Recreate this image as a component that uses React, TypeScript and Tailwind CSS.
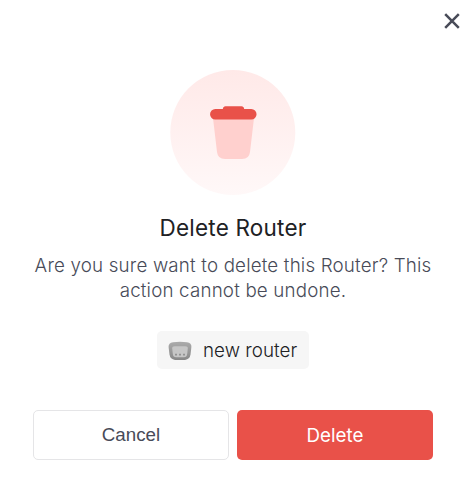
import React from "react";

function CloseIcon() {
  return (
    <svg width="16" height="16" viewBox="0 0 16 16" fill="none" stroke="#484b58" strokeWidth="2.5">
      <path d="M1.2 1.2 14.8 14.8M14.8 1.2 1.2 14.8" />
    </svg>
  );
}

function TrashIcon() {
  return (
    <svg className="block" width="126" height="126" viewBox="0 0 126 126" fill="none">
      <defs>
        <linearGradient id="halo" x1="0" y1="0" x2="0" y2="1">
          <stop offset="0" stopColor="#ffe9e8" />
          <stop offset="1" stopColor="#fff8f8" />
        </linearGradient>
      </defs>
      <circle cx="62.8" cy="62.5" r="62.5" fill="url(#halo)" />
      <path d="M43 48H84L80 82Q79.200 89 72 89H55Q47.800 89 47 82Z" fill="#ffd0ce" />
      <path d="M45.300 39H52.800Q53.200 36.200 55.500 36.200H71.500Q73.800 36.200 74.200 39H81.300A5.250 5.250 0 0 1 81.300 49.500H45.300A5.250 5.250 0 0 1 45.300 39Z" fill="#e95149" />
    </svg>
  );
}

function RouterIcon() {
  return (
    <svg className="block" width="24" height="20" viewBox="0 0 24 20" fill="none">
      <defs>
        <linearGradient id="shell" x1="0" y1="0" x2="0" y2="1">
          <stop offset="0" stopColor="#ababab" />
          <stop offset="1" stopColor="#888" />
        </linearGradient>
      </defs>
      <path d="M5 1.200Q12 .4 19 1.200Q23.700 1.800 23.400 6L22.500 13.500Q21.800 18.300 17 18.900Q12 19.300 7 18.900Q2.200 18.300 1.500 13.500L.6 6Q.3 1.800 5 1.200Z" fill="url(#shell)" />
      <path d="M6.500 5.200H17.500Q20 5.200 19.800 7.500L19.200 13Q18.800 16.200 16 16.200H8Q5.200 16.200 4.800 13L4.200 7.500Q4 5.200 6.500 5.200Z" fill="#c6c6c6" />
      <path d="M7.200 13.600h1.600M11.200 13.600h1.600M15.200 13.600h1.600" stroke="#858585" strokeWidth="1.600" />
    </svg>
  );
}

export default function App() {
  return (
    <div className="flex h-[477px] w-[470px] flex-col bg-white font-['Inter',sans-serif] text-[#484b58]">
      <header className="flex h-[70px] justify-end pt-[13px] pr-[10px]">
        <button className="h-4 w-4" aria-label="Close">
          <CloseIcon />
        </button>
      </header>
      <main className="flex flex-col items-center pr-[4px]">
        <TrashIcon />
        <h1 className="mt-[18px] text-[22.5px] leading-[28px] tracking-[0.2px] text-[#202124]">Delete Router</h1>
        <p className="mt-[11px] w-[404px] text-center text-[18.75px] leading-[25px] font-light tracking-[0.18px]">
          Are you sure want to delete this Router? This action cannot be undone.
        </p>
        <div className="mt-[28px] flex h-[38px] w-[152px] items-center gap-[11.5px] rounded-[5px] bg-[#f6f6f6] pt-px pl-[10.5px]">
          <RouterIcon />
          <span className="pt-px text-[18.75px] leading-6 font-light tracking-[0.05px] whitespace-nowrap text-[#202124]">new router</span>
        </div>
        <div className="mt-[41px] flex w-[400px] gap-2">
          <button className="h-[50px] w-[196px] rounded-[5px] border border-[#e5e5e7] pt-px font-['Liberation_Sans',sans-serif] text-[18.75px]">Cancel</button>
          <button className="h-[50px] w-[196px] rounded-[5px] bg-[#e95149] pt-0.5 text-[18.75px] text-white">Delete</button>
        </div>
      </main>
    </div>
  );
}
